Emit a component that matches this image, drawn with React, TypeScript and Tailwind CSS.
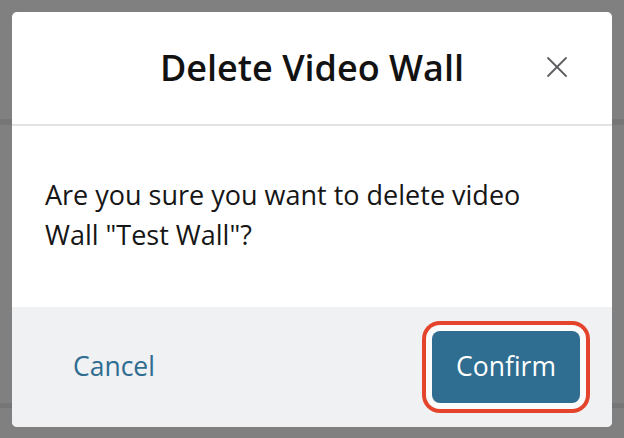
import { X } from "lucide-react";

const App = () => {
  return (
    <div className="relative w-[624px] h-[438px] overflow-hidden bg-[#808080] font-['Open_Sans',sans-serif]">
      {/* dimmed page rows behind the dialog */}
      <div className="h-[119px]" />
      <div className="h-[6px] bg-[#767676]" />
      <div className="h-[278px]" />
      <div className="h-[5px] bg-[#767676]" />

      <div className="absolute left-[12px] top-[12px] w-[600px] rounded-[5px] bg-white overflow-hidden">
        <div className="relative flex h-[114px] items-center justify-center border-b-[2px] border-[#e2e3e5]">
          <h2 className="text-[36px] font-semibold text-[#121212]">
            Delete Video Wall
          </h2>
          <button className="absolute right-[37px] top-[37px] text-[#5c5d60]">
            <X size={36} strokeWidth={1.2} />
          </button>
        </div>

        <div className="h-[181px] pl-[33px] pt-[49px]">
          <p className="w-[500px] text-[27px] leading-[40px] text-[#161616]">
            Are you sure you want to delete video Wall "Test Wall"?
          </p>
        </div>

        <div className="flex h-[120px] items-center justify-between bg-[#f0f1f3] pl-[61px] pr-[32px]">
          <button className="text-[26.5px] text-[#2f6d90]">Cancel</button>
          <button className="h-[72px] w-[148px] rounded-[8px] bg-[#306e91] text-[26.5px] text-white shadow-[0_0_0_6px_#fbfbfb,0_0_0_10px_#e5442c]">
            Confirm
          </button>
        </div>
      </div>
    </div>
  );
};

export default App;
